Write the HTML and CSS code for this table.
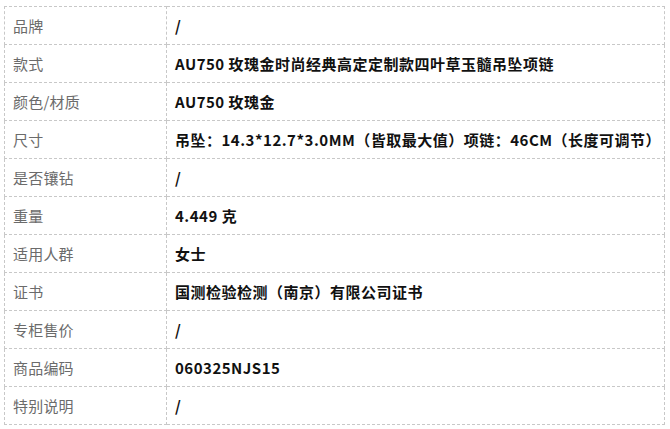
FILE: index.html
```html
<!DOCTYPE html>
<html lang="zh-CN">
<head>
<meta charset="utf-8">
<title>商品参数</title>
<link rel="stylesheet" href="styles.css">
</head>
<body>
<table class="spec">
  <colgroup><col class="spec-key-col"><col></colgroup>
  <tbody>
    <tr><td class="key">品牌</td><td class="val">/</td></tr>
    <tr><td class="key">款式</td><td class="val">AU750 玫瑰金时尚经典高定定制款四叶草玉髓吊坠项链</td></tr>
    <tr><td class="key">颜色/材质</td><td class="val">AU750 玫瑰金</td></tr>
    <tr><td class="key">尺寸</td><td class="val">吊坠：14.3*12.7*3.0MM（皆取最大值）项链：46CM（长度可调节）</td></tr>
    <tr><td class="key">是否镶钻</td><td class="val">/</td></tr>
    <tr><td class="key">重量</td><td class="val">4.449 克</td></tr>
    <tr><td class="key">适用人群</td><td class="val">女士</td></tr>
    <tr><td class="key">证书</td><td class="val">国测检验检测（南京）有限公司证书</td></tr>
    <tr><td class="key">专柜售价</td><td class="val">/</td></tr>
    <tr><td class="key">商品编码</td><td class="val">060325NJS15</td></tr>
    <tr><td class="key">特别说明</td><td class="val">/</td></tr>
  </tbody>
</table>
</body>
</html>
```

FILE: styles.css
```css
html, body {
  background: #ffffff;
}
body {
  margin: 6px 0 0 4px;
  font-family: "Noto Sans CJK SC", "Microsoft YaHei", sans-serif;
  font-size: 15px;
}
.spec {
  border-collapse: collapse;
  width: 661px;
  table-layout: fixed;
}
.spec-key-col {
  width: 162px;
}
.spec td {
  border: 1px dashed #c8c8c8;
  height: 38px;
  padding: 0 8px;
  box-sizing: border-box;
  vertical-align: middle;
  line-height: 20px;
  white-space: nowrap;
}
.spec .key {
  color: #6b6b6b;
  font-weight: 400;
  letter-spacing: 0.2px;
}
.spec .val {
  color: #111111;
  font-weight: 700;
  letter-spacing: 0.5px;
}
```
